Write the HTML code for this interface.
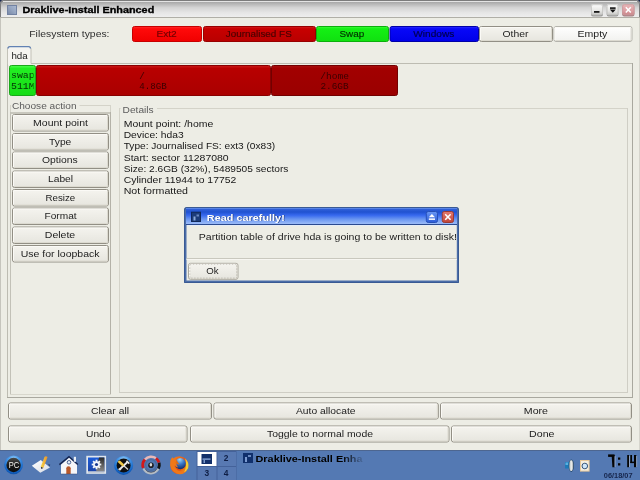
<!DOCTYPE html>
<html><head><meta charset="utf-8"><style>html,body{margin:0;padding:0;width:640px;height:480px;overflow:hidden;background:#edede5}</style></head><body>
<svg width="640" height="480" viewBox="0 0 640 480" style="display:block;will-change:transform">
<defs>
<linearGradient id="btn" x1="0" y1="0" x2="0" y2="1"><stop offset="0" stop-color="#f5f4ef"/><stop offset="1" stop-color="#e6e5de"/></linearGradient>
<linearGradient id="btnw" x1="0" y1="0" x2="0" y2="1"><stop offset="0" stop-color="#ffffff"/><stop offset="1" stop-color="#f1f1ee"/></linearGradient>
<linearGradient id="title" x1="0" y1="0" x2="0" y2="17" gradientUnits="userSpaceOnUse"><stop offset="0" stop-color="#a0a0a0"/><stop offset="0.12" stop-color="#a8a8a8"/><stop offset="0.45" stop-color="#d4d4d4"/><stop offset="0.75" stop-color="#e6e6e6"/><stop offset="1" stop-color="#eeeeee"/></linearGradient>
<linearGradient id="wbtn" x1="0" y1="0" x2="0" y2="1"><stop offset="0" stop-color="#fdfdfd"/><stop offset="0.6" stop-color="#e6e6e4"/><stop offset="1" stop-color="#c4c4c2"/></linearGradient>
<linearGradient id="wclose" x1="0" y1="0" x2="0" y2="1"><stop offset="0" stop-color="#eab8ba"/><stop offset="0.6" stop-color="#dc9ea2"/><stop offset="1" stop-color="#c88488"/></linearGradient>
<linearGradient id="red1" x1="0" y1="0" x2="0" y2="1"><stop offset="0" stop-color="#ff3030"/><stop offset="0.15" stop-color="#ff0a0a"/><stop offset="1" stop-color="#f00000"/></linearGradient>
<linearGradient id="red2" x1="0" y1="0" x2="0" y2="1"><stop offset="0" stop-color="#d42020"/><stop offset="0.15" stop-color="#c80000"/><stop offset="1" stop-color="#b80000"/></linearGradient>
<linearGradient id="grn" x1="0" y1="0" x2="0" y2="1"><stop offset="0" stop-color="#40ff40"/><stop offset="0.15" stop-color="#14f014"/><stop offset="1" stop-color="#10e010"/></linearGradient>
<linearGradient id="blu" x1="0" y1="0" x2="0" y2="1"><stop offset="0" stop-color="#3030ff"/><stop offset="0.15" stop-color="#0808f8"/><stop offset="1" stop-color="#0000e8"/></linearGradient>
<linearGradient id="pred" x1="0" y1="0" x2="0" y2="1"><stop offset="0" stop-color="#cc1a1a"/><stop offset="0.1" stop-color="#b80000"/><stop offset="1" stop-color="#aa0000"/></linearGradient>
<linearGradient id="phome" x1="0" y1="0" x2="0" y2="1"><stop offset="0" stop-color="#aa1010"/><stop offset="0.1" stop-color="#a20000"/><stop offset="1" stop-color="#9a0000"/></linearGradient>
<linearGradient id="pgrn" x1="0" y1="0" x2="0" y2="1"><stop offset="0" stop-color="#50ff50"/><stop offset="0.1" stop-color="#22ee22"/><stop offset="1" stop-color="#16dd16"/></linearGradient>
<linearGradient id="dtitle" x1="0" y1="208" x2="0" y2="224" gradientUnits="userSpaceOnUse"><stop offset="0" stop-color="#7aa2f0"/><stop offset="0.07" stop-color="#3060d8"/><stop offset="0.25" stop-color="#2052d0"/><stop offset="0.45" stop-color="#3668ee"/><stop offset="0.7" stop-color="#6a96f0"/><stop offset="1" stop-color="#9cbcf8"/></linearGradient>
<linearGradient id="dbtnb" x1="0" y1="0" x2="0" y2="1"><stop offset="0" stop-color="#6a98f4"/><stop offset="1" stop-color="#2a5ad8"/></linearGradient>
<linearGradient id="dbtnr" x1="0" y1="0" x2="0" y2="1"><stop offset="0" stop-color="#e27a70"/><stop offset="1" stop-color="#c04438"/></linearGradient>
<linearGradient id="ticon" x1="1" y1="0" x2="0" y2="1"><stop offset="0" stop-color="#aab8d0"/><stop offset="0.5" stop-color="#94a4c0"/><stop offset="1" stop-color="#7a8aa8"/></linearGradient>
<radialGradient id="rg1" cx="0.5" cy="0.3" r="0.7"><stop offset="0" stop-color="#8ec8ff"/><stop offset="0.6" stop-color="#2a7ad8"/><stop offset="1" stop-color="#0b3f8c"/></radialGradient>
<radialGradient id="rg2" cx="0.5" cy="0.35" r="0.6"><stop offset="0" stop-color="#4a4a4a"/><stop offset="1" stop-color="#0a0a0a"/></radialGradient>
<linearGradient id="lgk" x1="0" y1="0" x2="1" y2="1"><stop offset="0" stop-color="#3a78e0"/><stop offset="0.55" stop-color="#1240a8"/><stop offset="0.6" stop-color="#555"/><stop offset="1" stop-color="#222"/></linearGradient>
<radialGradient id="ff" cx="0.45" cy="0.45" r="0.6"><stop offset="0" stop-color="#ffd040"/><stop offset="0.6" stop-color="#f08a10"/><stop offset="1" stop-color="#c03a0a"/></radialGradient>
<linearGradient id="fade" x1="0" x2="1"><stop offset="0" stop-color="#000"/><stop offset="0.8" stop-color="#000"/><stop offset="1" stop-color="#000" stop-opacity="0.1"/></linearGradient>
<clipPath id="cswap"><rect x="10" y="66" width="23.5" height="29"/></clipPath>
</defs>
<rect x="0" y="0" width="640" height="451" fill="#edede5"/>
<rect x="0" y="0" width="1" height="451" fill="#c6c5bd"/>
<rect x="639" y="0" width="1" height="451" fill="#d6d5cd"/>
<rect x="0" y="0" width="640" height="4" fill="#1c2a52"/>
<path d="M0 17 V4 Q0 0 4 0 H636 Q640 0 640 4 V17 Z" fill="url(#title)"/>
<path d="M0.5 17 V4 Q0.5 0.5 4 0.5 H636 Q639.5 0.5 639.5 4 V17" fill="none" stroke="#7c7c7c" stroke-width="1"/>
<rect x="3" y="1" width="634" height="1" fill="#e4e4e4"/>
<rect x="0" y="17" width="640" height="1" fill="#b0afa7"/>
<rect x="7" y="5" width="10" height="10" fill="#7282a2"/>
<rect x="8" y="6" width="8" height="8" fill="url(#ticon)"/>
<text x="22.50" y="13.00" font-family="Liberation Sans" font-size="9.6" font-weight="bold" fill="#000" textLength="131.75" lengthAdjust="spacingAndGlyphs" stroke="#000" stroke-width="0.35">Draklive-Install Enhanced</text>
<rect x="591" y="5" width="12" height="11.5" rx="2" fill="#9a9a98"/>
<rect x="591" y="4.2" width="12" height="11" rx="2" fill="url(#wbtn)"/>
<rect x="591.5" y="4.7" width="11" height="10" rx="1.5" fill="none" stroke="#bdbdbb" stroke-width="1" opacity="0.7"/>
<rect x="606.7" y="5" width="11.699999999999932" height="11.5" rx="2" fill="#9a9a98"/>
<rect x="606.7" y="4.2" width="11.699999999999932" height="11" rx="2" fill="url(#wbtn)"/>
<rect x="607.2" y="4.7" width="10.699999999999932" height="10" rx="1.5" fill="none" stroke="#bdbdbb" stroke-width="1" opacity="0.7"/>
<rect x="622.2" y="5" width="12.199999999999932" height="11.5" rx="2" fill="#a88486"/>
<rect x="622.2" y="4.2" width="12.199999999999932" height="11" rx="2" fill="url(#wclose)"/>
<rect x="622.7" y="4.7" width="11.199999999999932" height="10" rx="1.5" fill="none" stroke="#c89a9c" stroke-width="1" opacity="0.7"/>
<rect x="594" y="11" width="5.5" height="1.8" fill="#1a1a1a"/>
<rect x="610" y="7.3" width="5.6" height="1.6" fill="#111"/>
<path d="M609.8 9.6 H615.8 L612.8 12.8 Z" fill="#111"/>
<path d="M625.8 7.2 L630.8 12.4 M630.8 7.2 L625.8 12.4" stroke="#fff" stroke-width="1.5"/>
<text x="29.25" y="37.00" font-family="Liberation Sans" font-size="9.4" font-weight="normal" fill="#303030" textLength="80.25" lengthAdjust="spacingAndGlyphs" >Filesystem types:</text>
<rect x="132.5" y="26.5" width="69" height="15" rx="2" fill="url(#red1)" stroke="#c80000" stroke-width="1"/>
<text x="156.50" y="36.50" font-family="Liberation Sans" font-size="9.4" font-weight="normal" fill="#700000" textLength="20.25" lengthAdjust="spacingAndGlyphs" stroke="#700000" stroke-width="0.15">Ext2</text>
<rect x="203.5" y="26.5" width="112" height="15" rx="2" fill="url(#red2)" stroke="#980000" stroke-width="1"/>
<text x="225.75" y="36.50" font-family="Liberation Sans" font-size="9.4" font-weight="normal" fill="#480000" textLength="66.00" lengthAdjust="spacingAndGlyphs" stroke="#480000" stroke-width="0.15">Journalised FS</text>
<rect x="316.5" y="26.5" width="72" height="15" rx="2" fill="url(#grn)" stroke="#0cb00c" stroke-width="1"/>
<text x="339.50" y="36.50" font-family="Liberation Sans" font-size="9.4" font-weight="normal" fill="#023002" textLength="24.75" lengthAdjust="spacingAndGlyphs" stroke="#023002" stroke-width="0.15">Swap</text>
<rect x="390.0" y="26.5" width="88.5" height="15" rx="2" fill="url(#blu)" stroke="#0000a8" stroke-width="1"/>
<text x="413.25" y="36.50" font-family="Liberation Sans" font-size="9.4" font-weight="normal" fill="#00004a" textLength="41.00" lengthAdjust="spacingAndGlyphs" stroke="#00004a" stroke-width="0.15">Windows</text>
<rect x="479.50" y="26.50" width="73.00" height="15.00" rx="2" fill="url(#btn)" stroke="#928f85" stroke-width="1"/>
<path d="M480.50 40.00 V27.50 H551.00" fill="none" stroke="#fbfaf6" stroke-width="1"/>
<path d="M481.00 40.50 H551.50 V28.00" fill="none" stroke="#dcdad0" stroke-width="1"/>
<text x="502.50" y="36.50" font-family="Liberation Sans" font-size="9.4" font-weight="normal" fill="#222" textLength="26.00" lengthAdjust="spacingAndGlyphs" >Other</text>
<rect x="554.00" y="26.50" width="78.00" height="15.00" rx="2" fill="url(#btnw)" stroke="#b4b3ac" stroke-width="1"/>
<path d="M555.00 40.00 V27.50 H630.50" fill="none" stroke="#fbfaf6" stroke-width="1"/>
<path d="M555.50 40.50 H631.00 V28.00" fill="none" stroke="#dcdad0" stroke-width="1"/>
<text x="577.50" y="36.50" font-family="Liberation Sans" font-size="9.4" font-weight="normal" fill="#222" textLength="29.90" lengthAdjust="spacingAndGlyphs" >Empty</text>
<rect x="7.5" y="63.5" width="625" height="334" fill="none" stroke="#bdbcb2" stroke-width="1"/>
<rect x="632" y="63" width="1" height="335" fill="#a9a89f"/>
<rect x="7" y="397" width="626" height="1" fill="#a9a89f"/>
<path d="M7.5 64 V49 Q7.5 46.5 10 46.5 H28.5 Q31 46.5 31 49 V64" fill="#f5f4f0" stroke="#c3c2b8" stroke-width="1"/>
<path d="M8 48.5 Q8 46.6 10 46.6 H28.5 Q30.5 46.6 30.5 48.5" fill="none" stroke="#6282b4" stroke-width="1.3"/>
<rect x="8" y="63" width="22.5" height="2" fill="#f5f4f0"/>
<text x="11.40" y="58.80" font-family="Liberation Sans" font-size="9.4" font-weight="normal" fill="#1a1a1a" textLength="16.30" lengthAdjust="spacingAndGlyphs" >hda</text>
<rect x="9.5" y="65.5" width="26" height="30" rx="2" fill="url(#pgrn)" stroke="#1aa81a" stroke-width="1"/>
<g clip-path="url(#cswap)">
<text x="11.00" y="78.20" font-family="Liberation Mono" font-size="9.9" font-weight="normal" fill="#063006" >swap</text>
<text x="11.00" y="88.90" font-family="Liberation Mono" font-size="9.9" font-weight="normal" fill="#063006" >511M</text>
</g>
<rect x="36.5" y="65.5" width="234" height="30" rx="2" fill="url(#pred)" stroke="#880000" stroke-width="1"/>
<text x="139.30" y="78.90" font-family="Liberation Mono" font-size="9.3" font-weight="normal" fill="#3a0000" >/</text>
<text x="139.30" y="88.80" font-family="Liberation Mono" font-size="9.3" font-weight="normal" fill="#3a0000" textLength="27.50" lengthAdjust="spacingAndGlyphs" >4.8GB</text>
<rect x="271.5" y="65.5" width="126" height="30" rx="2" fill="url(#phome)" stroke="#720000" stroke-width="1"/>
<text x="320.20" y="78.90" font-family="Liberation Mono" font-size="9.3" font-weight="normal" fill="#3a0000" textLength="28.80" lengthAdjust="spacingAndGlyphs" >/home</text>
<text x="320.40" y="89.30" font-family="Liberation Mono" font-size="9.3" font-weight="normal" fill="#3a0000" textLength="28.20" lengthAdjust="spacingAndGlyphs" >2.6GB</text>
<rect x="10.5" y="105.5" width="100" height="289" fill="none" stroke="#d4d3c9" stroke-width="1"/>
<rect x="10" y="112" width="101" height="2" fill="#c8c7bd"/>
<rect x="10" y="112" width="1" height="283" fill="#c2c1b7"/>
<rect x="110" y="112" width="1" height="283" fill="#b4b2a8"/>
<rect x="10" y="394" width="101" height="1" fill="#d8d7cd"/>
<rect x="11" y="101" width="68.5" height="8" fill="#edede5"/>
<text x="11.90" y="109.20" font-family="Liberation Sans" font-size="9.4" font-weight="normal" fill="#5c5c5c" textLength="64.70" lengthAdjust="spacingAndGlyphs" >Choose action</text>
<rect x="12.50" y="114.50" width="96.00" height="16.50" rx="2" fill="url(#btn)" stroke="#928f85" stroke-width="1"/>
<path d="M13.50 129.50 V115.50 H107.00" fill="none" stroke="#fbfaf6" stroke-width="1"/>
<path d="M14.00 130.00 H107.50 V116.00" fill="none" stroke="#dcdad0" stroke-width="1"/>
<text x="33.10" y="125.80" font-family="Liberation Sans" font-size="9.4" font-weight="normal" fill="#1c1c1c" textLength="54.80" lengthAdjust="spacingAndGlyphs" >Mount point</text>
<rect x="12.50" y="133.50" width="96.00" height="16.50" rx="2" fill="url(#btn)" stroke="#928f85" stroke-width="1"/>
<path d="M13.50 148.50 V134.50 H107.00" fill="none" stroke="#fbfaf6" stroke-width="1"/>
<path d="M14.00 149.00 H107.50 V135.00" fill="none" stroke="#dcdad0" stroke-width="1"/>
<text x="49.10" y="144.51" font-family="Liberation Sans" font-size="9.4" font-weight="normal" fill="#1c1c1c" textLength="22.20" lengthAdjust="spacingAndGlyphs" >Type</text>
<rect x="12.50" y="152.00" width="96.00" height="16.50" rx="2" fill="url(#btn)" stroke="#928f85" stroke-width="1"/>
<path d="M13.50 167.00 V153.00 H107.00" fill="none" stroke="#fbfaf6" stroke-width="1"/>
<path d="M14.00 167.50 H107.50 V153.50" fill="none" stroke="#dcdad0" stroke-width="1"/>
<text x="42.00" y="163.22" font-family="Liberation Sans" font-size="9.4" font-weight="normal" fill="#1c1c1c" textLength="35.70" lengthAdjust="spacingAndGlyphs" >Options</text>
<rect x="12.50" y="171.00" width="96.00" height="16.50" rx="2" fill="url(#btn)" stroke="#928f85" stroke-width="1"/>
<path d="M13.50 186.00 V172.00 H107.00" fill="none" stroke="#fbfaf6" stroke-width="1"/>
<path d="M14.00 186.50 H107.50 V172.50" fill="none" stroke="#dcdad0" stroke-width="1"/>
<text x="48.00" y="181.93" font-family="Liberation Sans" font-size="9.4" font-weight="normal" fill="#1c1c1c" textLength="25.10" lengthAdjust="spacingAndGlyphs" >Label</text>
<rect x="12.50" y="189.50" width="96.00" height="16.50" rx="2" fill="url(#btn)" stroke="#928f85" stroke-width="1"/>
<path d="M13.50 204.50 V190.50 H107.00" fill="none" stroke="#fbfaf6" stroke-width="1"/>
<path d="M14.00 205.00 H107.50 V191.00" fill="none" stroke="#dcdad0" stroke-width="1"/>
<text x="45.50" y="200.64" font-family="Liberation Sans" font-size="9.4" font-weight="normal" fill="#1c1c1c" textLength="29.70" lengthAdjust="spacingAndGlyphs" >Resize</text>
<rect x="12.50" y="208.00" width="96.00" height="16.50" rx="2" fill="url(#btn)" stroke="#928f85" stroke-width="1"/>
<path d="M13.50 223.00 V209.00 H107.00" fill="none" stroke="#fbfaf6" stroke-width="1"/>
<path d="M14.00 223.50 H107.50 V209.50" fill="none" stroke="#dcdad0" stroke-width="1"/>
<text x="44.50" y="219.35" font-family="Liberation Sans" font-size="9.4" font-weight="normal" fill="#1c1c1c" textLength="32.10" lengthAdjust="spacingAndGlyphs" >Format</text>
<rect x="12.50" y="227.00" width="96.00" height="16.50" rx="2" fill="url(#btn)" stroke="#928f85" stroke-width="1"/>
<path d="M13.50 242.00 V228.00 H107.00" fill="none" stroke="#fbfaf6" stroke-width="1"/>
<path d="M14.00 242.50 H107.50 V228.50" fill="none" stroke="#dcdad0" stroke-width="1"/>
<text x="44.80" y="238.06" font-family="Liberation Sans" font-size="9.4" font-weight="normal" fill="#1c1c1c" textLength="30.40" lengthAdjust="spacingAndGlyphs" >Delete</text>
<rect x="12.50" y="245.50" width="96.00" height="16.50" rx="2" fill="url(#btn)" stroke="#928f85" stroke-width="1"/>
<path d="M13.50 260.50 V246.50 H107.00" fill="none" stroke="#fbfaf6" stroke-width="1"/>
<path d="M14.00 261.00 H107.50 V247.00" fill="none" stroke="#dcdad0" stroke-width="1"/>
<text x="20.70" y="256.77" font-family="Liberation Sans" font-size="9.4" font-weight="normal" fill="#1c1c1c" textLength="78.90" lengthAdjust="spacingAndGlyphs" >Use for loopback</text>
<rect x="119.5" y="108.5" width="508" height="284" fill="none" stroke="#d4d3c9" stroke-width="1"/>
<rect x="627" y="108" width="1" height="285" fill="#cfcec5"/>
<rect x="119" y="392" width="509" height="1" fill="#cfcec5"/>
<rect x="120.5" y="104" width="36.5" height="8" fill="#edede5"/>
<text x="122.60" y="112.60" font-family="Liberation Sans" font-size="9.4" font-weight="normal" fill="#5c5c5c" textLength="31.00" lengthAdjust="spacingAndGlyphs" >Details</text>
<text x="123.70" y="126.80" font-family="Liberation Sans" font-size="9.4" font-weight="normal" fill="#161616" textLength="89.60" lengthAdjust="spacingAndGlyphs" >Mount point: /home</text>
<text x="123.70" y="138.05" font-family="Liberation Sans" font-size="9.4" font-weight="normal" fill="#161616" textLength="60.00" lengthAdjust="spacingAndGlyphs" >Device: hda3</text>
<text x="123.70" y="149.30" font-family="Liberation Sans" font-size="9.4" font-weight="normal" fill="#161616" textLength="151.50" lengthAdjust="spacingAndGlyphs" >Type: Journalised FS: ext3 (0x83)</text>
<text x="123.70" y="160.55" font-family="Liberation Sans" font-size="9.4" font-weight="normal" fill="#161616" textLength="105.00" lengthAdjust="spacingAndGlyphs" >Start: sector 11287080</text>
<text x="123.70" y="171.80" font-family="Liberation Sans" font-size="9.4" font-weight="normal" fill="#161616" textLength="164.70" lengthAdjust="spacingAndGlyphs" >Size: 2.6GB (32%), 5489505 sectors</text>
<text x="123.70" y="183.05" font-family="Liberation Sans" font-size="9.4" font-weight="normal" fill="#161616" textLength="112.60" lengthAdjust="spacingAndGlyphs" >Cylinder 11944 to 17752</text>
<text x="123.70" y="194.30" font-family="Liberation Sans" font-size="9.4" font-weight="normal" fill="#161616" textLength="64.30" lengthAdjust="spacingAndGlyphs" >Not formatted</text>
<rect x="8.50" y="403.00" width="203.00" height="16.00" rx="2" fill="url(#btn)" stroke="#928f85" stroke-width="1"/>
<path d="M9.50 417.50 V404.00 H210.00" fill="none" stroke="#fbfaf6" stroke-width="1"/>
<path d="M10.00 418.00 H210.50 V404.50" fill="none" stroke="#dcdad0" stroke-width="1"/>
<text x="91.00" y="414.00" font-family="Liberation Sans" font-size="9.4" font-weight="normal" fill="#1c1c1c" textLength="38.00" lengthAdjust="spacingAndGlyphs" >Clear all</text>
<rect x="214.00" y="403.00" width="224.30" height="16.00" rx="2" fill="url(#btn)" stroke="#928f85" stroke-width="1"/>
<path d="M215.00 417.50 V404.00 H436.80" fill="none" stroke="#fbfaf6" stroke-width="1"/>
<path d="M215.50 418.00 H437.30 V404.50" fill="none" stroke="#dcdad0" stroke-width="1"/>
<text x="296.00" y="414.00" font-family="Liberation Sans" font-size="9.4" font-weight="normal" fill="#1c1c1c" textLength="59.50" lengthAdjust="spacingAndGlyphs" >Auto allocate</text>
<rect x="440.50" y="403.00" width="191.00" height="16.00" rx="2" fill="url(#btn)" stroke="#928f85" stroke-width="1"/>
<path d="M441.50 417.50 V404.00 H630.00" fill="none" stroke="#fbfaf6" stroke-width="1"/>
<path d="M442.00 418.00 H630.50 V404.50" fill="none" stroke="#dcdad0" stroke-width="1"/>
<text x="523.80" y="414.00" font-family="Liberation Sans" font-size="9.4" font-weight="normal" fill="#1c1c1c" textLength="24.20" lengthAdjust="spacingAndGlyphs" >More</text>
<rect x="8.50" y="426.00" width="178.50" height="16.00" rx="2" fill="url(#btn)" stroke="#928f85" stroke-width="1"/>
<path d="M9.50 440.50 V427.00 H185.50" fill="none" stroke="#fbfaf6" stroke-width="1"/>
<path d="M10.00 441.00 H186.00 V427.50" fill="none" stroke="#dcdad0" stroke-width="1"/>
<text x="86.00" y="437.00" font-family="Liberation Sans" font-size="9.4" font-weight="normal" fill="#1c1c1c" textLength="24.50" lengthAdjust="spacingAndGlyphs" >Undo</text>
<rect x="190.50" y="426.00" width="258.50" height="16.00" rx="2" fill="url(#btn)" stroke="#928f85" stroke-width="1"/>
<path d="M191.50 440.50 V427.00 H447.50" fill="none" stroke="#fbfaf6" stroke-width="1"/>
<path d="M192.00 441.00 H448.00 V427.50" fill="none" stroke="#dcdad0" stroke-width="1"/>
<text x="267.00" y="437.00" font-family="Liberation Sans" font-size="9.4" font-weight="normal" fill="#1c1c1c" textLength="106.00" lengthAdjust="spacingAndGlyphs" >Toggle to normal mode</text>
<rect x="451.50" y="426.00" width="180.00" height="16.00" rx="2" fill="url(#btn)" stroke="#928f85" stroke-width="1"/>
<path d="M452.50 440.50 V427.00 H630.00" fill="none" stroke="#fbfaf6" stroke-width="1"/>
<path d="M453.00 441.00 H630.50 V427.50" fill="none" stroke="#dcdad0" stroke-width="1"/>
<text x="529.10" y="437.00" font-family="Liberation Sans" font-size="9.4" font-weight="normal" fill="#1c1c1c" textLength="25.40" lengthAdjust="spacingAndGlyphs" >Done</text>
<path d="M184 282.7 V210 Q184 207 187 207 H456 Q459 207 459 210 V282.7 Z" fill="#4b6da8"/>
<path d="M184.5 282.5 V210 Q184.5 207.5 187 207.5 H456 Q458.5 207.5 458.5 210 V282.5 Z" fill="none" stroke="#3a5a94" stroke-width="1"/>
<rect x="186" y="208" width="271" height="16" fill="url(#dtitle)"/>
<rect x="186" y="224" width="271" height="1" fill="#2a4a90"/>
<rect x="186.5" y="225" width="270.3" height="1" fill="#e6edf6"/>
<rect x="186.5" y="226" width="270.3" height="54.5" fill="#edede5"/>
<rect x="191" y="211.7" width="10" height="10.3" fill="#10285a"/>
<rect x="192" y="212.7" width="8" height="8.3" fill="#1c3c7a"/>
<rect x="193.5" y="216.5" width="2" height="4" fill="#8aa8d8"/>
<rect x="196.5" y="214.5" width="2.5" height="2" fill="#6a88c0"/>
<text x="206.80" y="220.50" font-family="Liberation Sans" font-size="9.6" font-weight="bold" fill="#1a3070" textLength="78.00" lengthAdjust="spacingAndGlyphs" opacity="0.8" transform="translate(0.8,0.8)">Read carefully!</text>
<text x="206.80" y="220.50" font-family="Liberation Sans" font-size="9.6" font-weight="bold" fill="#ffffff" textLength="78.00" lengthAdjust="spacingAndGlyphs" >Read carefully!</text>
<rect x="426.3" y="211.5" width="11.2" height="11" rx="2" fill="url(#dbtnb)" stroke="#2650b8" stroke-width="1"/>
<path d="M428.8 217.3 L431.9 214 L435 217.3 Z" fill="#fff"/><rect x="428.8" y="218.4" width="6.2" height="1.5" fill="#fff"/>
<rect x="442.3" y="211.5" width="11.2" height="11" rx="2" fill="url(#dbtnr)" stroke="#9a3a34" stroke-width="1"/>
<path d="M445.2 214.3 L450.6 219.8 M450.6 214.3 L445.2 219.8" stroke="#fff" stroke-width="1.6"/>
<text x="198.80" y="239.80" font-family="Liberation Sans" font-size="9.4" font-weight="normal" fill="#1c1c1c" textLength="258.10" lengthAdjust="spacingAndGlyphs" >Partition table of drive hda is going to be written to disk!</text>
<rect x="186.5" y="258" width="270.3" height="1" fill="#c9c8be"/>
<rect x="186.5" y="259" width="270.3" height="1" fill="#f7f6f1"/>
<rect x="188.50" y="263.30" width="49.50" height="16.00" rx="2" fill="url(#btn)" stroke="#aaa89e" stroke-width="1"/>
<path d="M189.50 277.80 V264.30 H236.50" fill="none" stroke="#fbfaf6" stroke-width="1"/>
<path d="M190.00 278.30 H237.00 V264.80" fill="none" stroke="#dcdad0" stroke-width="1"/>
<rect x="189.8" y="264.3" width="47" height="13.8" fill="none" stroke="#a8a69c" stroke-width="0.8" stroke-dasharray="1.5 1.5" opacity="0.7"/>
<text x="206.30" y="274.30" font-family="Liberation Sans" font-size="9.4" font-weight="normal" fill="#1c1c1c" textLength="12.30" lengthAdjust="spacingAndGlyphs" >Ok</text>
<rect x="0" y="450" width="640" height="30" fill="#5479b3"/>
<rect x="0" y="450" width="640" height="1" fill="#4d6690"/>
<defs>
<radialGradient id="ring" cx="0.5" cy="0.25" r="0.8"><stop offset="0" stop-color="#b8e0ff"/><stop offset="0.35" stop-color="#4a9ae8"/><stop offset="0.75" stop-color="#1466c8"/><stop offset="1" stop-color="#0a4aa0"/></radialGradient>
<linearGradient id="dark" x1="0" y1="0" x2="0" y2="1"><stop offset="0" stop-color="#4a4a48"/><stop offset="0.5" stop-color="#1a1a1a"/><stop offset="1" stop-color="#0c0c0c"/></linearGradient>
<linearGradient id="paper" x1="0" y1="0" x2="1" y2="1"><stop offset="0" stop-color="#ffffff"/><stop offset="1" stop-color="#d8dce4"/></linearGradient>
<linearGradient id="pencil" x1="0" y1="0" x2="1" y2="0"><stop offset="0" stop-color="#f8d848"/><stop offset="1" stop-color="#e8902a"/></linearGradient>
<linearGradient id="kblue" x1="0" y1="0" x2="0" y2="1"><stop offset="0" stop-color="#1c5cd8"/><stop offset="1" stop-color="#1a44a8"/></linearGradient>
<linearGradient id="kdark" x1="0" y1="0" x2="0" y2="1"><stop offset="0" stop-color="#2a2a2a"/><stop offset="1" stop-color="#8a8a8a"/></linearGradient>
<radialGradient id="globe" cx="0.45" cy="0.15" r="0.9"><stop offset="0" stop-color="#9ad4f8"/><stop offset="0.45" stop-color="#3a78c8"/><stop offset="1" stop-color="#0a2060"/></radialGradient>
<linearGradient id="fox" x1="0" y1="0" x2="1" y2="1"><stop offset="0" stop-color="#f08a20"/><stop offset="0.6" stop-color="#e84a10"/><stop offset="1" stop-color="#f0c020"/></linearGradient>
<linearGradient id="cone" x1="0" y1="0" x2="1" y2="0"><stop offset="0" stop-color="#9aa8b0"/><stop offset="0.5" stop-color="#f4f4f0"/><stop offset="1" stop-color="#a0a8b0"/></linearGradient>
</defs>
<!-- PC -->
<circle cx="13.6" cy="464.8" r="9.4" fill="url(#ring)"/>
<circle cx="13.6" cy="465" r="7.2" fill="url(#dark)"/>
<text x="13.9" y="468.3" font-family="Liberation Sans" font-size="8.8" fill="#f4f4f0" text-anchor="middle" textLength="10.5" lengthAdjust="spacingAndGlyphs">PC</text>
<!-- pencil paper -->
<path d="M31.8 465.8 L40.8 460 L50 467.5 L40.3 472.8 Z" fill="url(#paper)"/>
<path d="M48 464.2 L50.3 464.8 L49.5 466 Z" fill="#223050"/>
<path d="M40.8 466.8 L44.6 456.8 Q46 455.8 47.6 457 L43.3 468 Z" fill="url(#pencil)"/>
<path d="M40.8 466.8 L43.3 468 L41.3 469 Z" fill="#2a2a30"/>
<!-- house -->
<path d="M61 464.5 L69 457.8 L77 464.5 V474 H61 Z" fill="#f6f6f8"/>
<path d="M59.4 464.6 L69 456.6 L77.8 464.6" fill="none" stroke="#152550" stroke-width="1.4"/>
<rect x="73.8" y="456.8" width="2.2" height="5" fill="#e8eef6"/>
<path d="M66.3 474 V468.3 Q66.3 466.3 68.5 466.3 Q70.7 466.3 70.7 468.3 V474 Z" fill="#b8582a"/>
<circle cx="69" cy="462.3" r="1.8" fill="#e8f0fa" stroke="#2a4478" stroke-width="0.8"/>
<rect x="60.5" y="473.5" width="17" height="1" fill="#3a4a70" opacity="0.5"/>
<!-- kcontrol -->
<rect x="86.3" y="455.8" width="19.8" height="18" fill="#dfe5ec"/>
<rect x="88" y="457.5" width="16.4" height="14" fill="url(#kblue)"/>
<path d="M99 457.5 H104.4 V471.5 H96 Z" fill="url(#kdark)"/>
<rect x="88" y="471.5" width="16.4" height="1.5" fill="#c4ccd6"/>
<g transform="translate(96.5,464.5)">
<circle r="3.3" fill="#f4f6fa"/>
<g fill="#f4f6fa"><rect x="-0.9" y="-4.8" width="1.8" height="9.6"/><rect x="-4.8" y="-0.9" width="9.6" height="1.8"/><rect x="-0.9" y="-4.8" width="1.8" height="9.6" transform="rotate(45)"/><rect x="-0.9" y="-4.8" width="1.8" height="9.6" transform="rotate(-45)"/></g>
<circle r="1.6" fill="#1a3a90"/>
</g>
<!-- tools -->
<circle cx="123.6" cy="465.4" r="9.5" fill="url(#ring)"/>
<circle cx="123.6" cy="465.5" r="7" fill="#0e0e0e"/>
<path d="M123.5 465.5 L128 469.5" stroke="#d8d8d8" stroke-width="1.4"/>
<path d="M120 469 L127.5 462" stroke="#ececec" stroke-width="1.8"/>
<path d="M126.5 460.8 L129.3 463.6" stroke="#ececec" stroke-width="1.6"/>
<path d="M119.3 461.8 L122.6 464.8" stroke="#f0c848" stroke-width="2.6" stroke-linecap="round"/>
<circle cx="119.8" cy="469.3" r="1.3" fill="#e4e4e4"/>
<!-- red gray -->
<circle cx="151" cy="465" r="5.4" fill="none" stroke="#44608a" stroke-width="1.2" opacity="0.6"/>
<path d="M143.3 468 A8.2 8.2 0 0 1 145 459.5" fill="none" stroke="#d41818" stroke-width="2.8"/>
<path d="M145 459.5 A8.2 8.2 0 0 1 156 458.3" fill="none" stroke="#e8b8b8" stroke-width="2.6"/>
<path d="M156 458.3 A8.2 8.2 0 0 1 159 462.5" fill="none" stroke="#d41818" stroke-width="2.8"/>
<path d="M159.2 462.8 A8.2 8.2 0 0 1 158.4 468.6" fill="none" stroke="#151515" stroke-width="2.8"/>
<path d="M158.3 468.8 A8.2 8.2 0 0 1 143.6 468.6" fill="none" stroke="#b4bcc4" stroke-width="2.4"/>
<path d="M157 468.5 A6.6 6.6 0 0 1 145 468.5" fill="none" stroke="#2a3040" stroke-width="0.9" opacity="0.7"/>
<circle cx="151" cy="465.2" r="2.8" fill="#1e1e22"/>
<ellipse cx="150.9" cy="464.8" rx="1.3" ry="1.7" fill="#d8d8d8"/>
<!-- firefox -->
<circle cx="179.2" cy="465.2" r="9" fill="url(#fox)"/>
<circle cx="180.3" cy="463.6" r="5.6" fill="url(#globe)"/>
<path d="M170.3 460.5 Q169.5 470.5 176.5 473.5 Q183.5 475.8 187.3 470 Q183.5 472.3 179.5 471 Q174.6 469 174.4 465 Q175.8 467.2 178.3 467.6 Q175.2 464 176.8 459.8 Q173.5 459.8 172.3 457 Z" fill="#f07818"/>
<path d="M176.8 459.8 Q177.5 462.8 179.5 464.5 Q177 464.5 175.5 463 Z" fill="#e86a10"/>
<path d="M185.2 458.5 Q189.2 462 188.2 468 Q186.5 471 184.2 472.2 Q187.2 466 185.2 458.5Z" fill="#f4cc30"/>
<!-- pager -->
<rect x="196.5" y="451" width="40" height="29" fill="#44629a"/>
<rect x="197.5" y="452" width="19" height="14" fill="#ffffff"/>
<rect x="201.5" y="454" width="10.5" height="10" fill="#13306a"/>
<rect x="202.5" y="458.5" width="8" height="1.2" fill="#9ab8e8"/>
<rect x="203.5" y="460" width="1.5" height="3" fill="#7a98c8"/>
<rect x="217.5" y="452" width="18.5" height="14" fill="#5879b2"/>
<rect x="197.5" y="467" width="19" height="13" fill="#5879b2"/>
<rect x="217.5" y="467" width="18.5" height="13" fill="#5879b2"/>
<text x="226.2" y="461.3" font-family="Liberation Sans" font-weight="bold" font-size="8.4" fill="#0e1e44" text-anchor="middle">2</text>
<text x="206.8" y="476.2" font-family="Liberation Sans" font-weight="bold" font-size="8.4" fill="#0e1e44" text-anchor="middle">3</text>
<text x="226.2" y="476.2" font-family="Liberation Sans" font-weight="bold" font-size="8.4" fill="#0e1e44" text-anchor="middle">4</text>
<!-- task -->
<rect x="243" y="453" width="10" height="10" fill="#10306c"/>
<rect x="245" y="457" width="2" height="5" fill="#7a9ad0"/>
<rect x="248" y="455" width="3" height="2" fill="#6a8ac0"/>
<text x="255.5" y="461.6" font-family="Liberation Sans" font-weight="bold" font-size="9.4" fill="url(#fade)" textLength="107" lengthAdjust="spacingAndGlyphs">Draklive-Install Enha</text>
<!-- speaker -->
<path d="M565 462 H569 V468.5 H565 Z" fill="#1e7ab8"/>
<path d="M565.5 462.5 H568 V465 H565.5Z" fill="#5ab0e0"/>
<path d="M568.5 462 L571.3 459.5 V472 L568.5 468.5 Z" fill="#2a86c0"/>
<ellipse cx="571.3" cy="465.7" rx="2.7" ry="6.2" fill="#2a4a6a"/>
<ellipse cx="571.2" cy="465.7" rx="2" ry="5.4" fill="url(#cone)"/>
<!-- clipboard -->
<rect x="580" y="460" width="9.6" height="11.6" fill="#e8c89a"/>
<rect x="581" y="461" width="7.6" height="9.6" fill="#f4eee2"/>
<circle cx="584.8" cy="466" r="2.8" fill="#cfe6fb" stroke="#26466e" stroke-width="0.9"/>
<!-- clock -->
<g fill="#050505">
<rect x="608.1" y="454.4" width="6.4" height="2.5"/>
<path d="M611.6 455 H614.6 V467.2 H612.4 Z"/>
<rect x="618" y="457.5" width="2.3" height="2.2"/><rect x="618" y="463.2" width="2.3" height="2.3"/>
<rect x="627.2" y="455" width="1.9" height="12.2"/>
<rect x="630.3" y="455" width="1.7" height="8"/>
<rect x="630.3" y="461.6" width="5" height="1.5"/>
<rect x="634" y="455" width="2.3" height="12.2"/>
</g>
<g fill="#e8eef8" opacity="0.55">
<rect x="614.6" y="456" width="0.8" height="11"/>
<rect x="629.1" y="456" width="0.8" height="11"/>
<rect x="636.3" y="456" width="0.8" height="11"/>
</g>
<text x="603.8" y="477.8" font-family="Liberation Sans" font-weight="bold" font-size="6.6" fill="#16264c" textLength="28.7" lengthAdjust="spacingAndGlyphs">06/18/07</text>

</svg>
</body></html>
